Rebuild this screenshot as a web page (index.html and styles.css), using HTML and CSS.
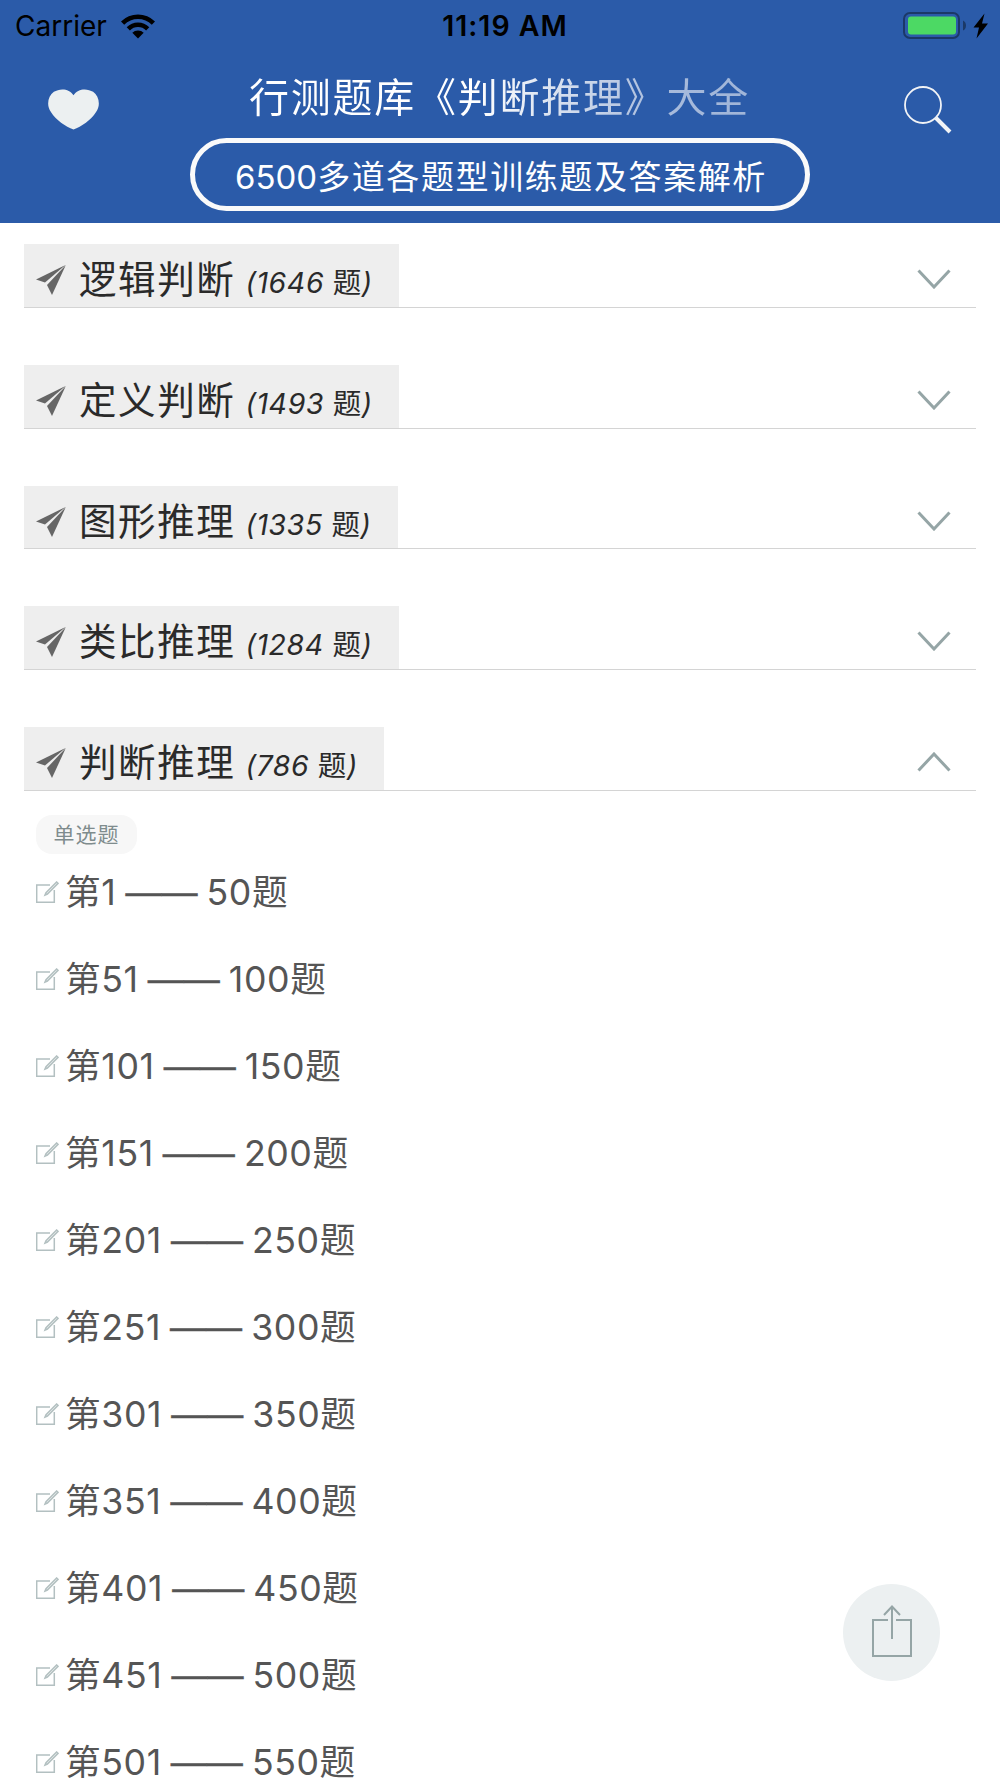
FILE: index.html
```html
<!DOCTYPE html>
<html lang="zh-CN">
<head>
  <meta charset="UTF-8">
  <meta name="viewport" content="width=device-width, initial-scale=1.0">
  <title>行测题库《判断推理》大全</title>
  <link rel="stylesheet" href="styles.css">
</head>
<body>
  <!-- Shared icons -->
  <svg class="icon-defs" width="0" height="0">
    <symbol id="icon-plane" viewBox="0 0 30 30">
      <path d="M0 14.5L29.5 0L9 17.5Z"/>
      <path d="M29.8 0L16 30L11 20Z"/>
    </symbol>
    <symbol id="icon-down" viewBox="0 0 34 20">
      <path d="M1.5 1.5L17 18L32.5 1.5"/>
    </symbol>
    <symbol id="icon-up" viewBox="0 0 34 20">
      <path d="M1.5 18.5L17 2L32.5 18.5"/>
    </symbol>
    <symbol id="icon-edit" viewBox="0 0 23 22">
      <path d="M14 4H.7V21.3H18.3V9"/>
      <path d="M9 14L10 11.6L20.6 1L22 2.4L11.4 13Z"/>
    </symbol>
  </svg>

  <header class="header">
    <div class="status-bar">
      <div class="status-left">
        <span class="carrier">Carrier</span>
        <svg class="wifi" width="34" height="25" viewBox="0 0 34 25">
          <path d="M0 7.5A24 24 0 0 1 34 7.5L30.8 10.7A19.6 19.6 0 0 0 3.2 10.7Z"/>
          <path d="M5.7 13.2A16 16 0 0 1 28.3 13.2L25.1 16.4A11.5 11.5 0 0 0 8.900 16.4Z"/>
          <path d="M11.3 18.8A8 8 0 0 1 22.7 18.8L17 24.5Z"/>
        </svg>
      </div>
      <span class="time">11:19 AM</span>
      <svg class="battery" width="85" height="27" viewBox="0 0 85 27">
        <rect class="battery-case" x="1" y="1" width="55" height="25" rx="6"/>
        <rect class="battery-level" x="5" y="4.500" width="48" height="18" rx="3"/>
        <path class="battery-cap" d="M60 8.5Q63 10 63 13.5T60 18.5Z"/>
        <path d="M81.5 1.5L70.5 15.5H76L73.5 26.5L85 11.5H79Z"/>
      </svg>
    </div>
    <div class="nav">
      <svg class="heart" width="51" height="41" viewBox="0 0 52 41">
        <path d="M26 6C22-1 12-1.500 6 2.500C0 7-2 16 3 23C8 31 18 38 26 41C34 38 44 31 49 23C54 16 52 7 46 2.500C40-1.500 30-1 26 6Z"/>
      </svg>
      <div class="titles">
        <h1 class="title">行测题库《判断推理》大全</h1>
        <p class="subtitle"><span class="num">6500</span>多道各题型训练题及答案解析</p>
      </div>
      <svg class="search" width="48" height="48" viewBox="0 0 48 48">
        <circle cx="19" cy="19" r="18"/>
        <path d="M32 32L46 46"/>
      </svg>
    </div>
  </header>

  <main class="sections">
    <section class="section">
      <div class="section-head">
        <div class="section-tag"><svg class="plane"><use href="#icon-plane"/></svg><span class="section-name">逻辑判断</span><span class="count">(1646 <b>题</b>)</span></div>
        <svg class="arrow"><use href="#icon-down"/></svg>
      </div>
    </section>
    <section class="section">
      <div class="section-head">
        <div class="section-tag"><svg class="plane"><use href="#icon-plane"/></svg><span class="section-name">定义判断</span><span class="count">(1493 <b>题</b>)</span></div>
        <svg class="arrow"><use href="#icon-down"/></svg>
      </div>
    </section>
    <section class="section">
      <div class="section-head">
        <div class="section-tag"><svg class="plane"><use href="#icon-plane"/></svg><span class="section-name">图形推理</span><span class="count">(1335 <b>题</b>)</span></div>
        <svg class="arrow"><use href="#icon-down"/></svg>
      </div>
    </section>
    <section class="section">
      <div class="section-head">
        <div class="section-tag"><svg class="plane"><use href="#icon-plane"/></svg><span class="section-name">类比推理</span><span class="count">(1284 <b>题</b>)</span></div>
        <svg class="arrow"><use href="#icon-down"/></svg>
      </div>
    </section>
    <section class="section">
      <div class="section-head">
        <div class="section-tag"><svg class="plane"><use href="#icon-plane"/></svg><span class="section-name">判断推理</span><span class="count">(786 <b>题</b>)</span></div>
        <svg class="arrow"><use href="#icon-up"/></svg>
      </div>
      <div class="section-body">
        <span class="type">单选题</span>
        <ul class="list">
          <li><svg class="edit"><use href="#icon-edit"/></svg>第1 <span class="dash">——</span> 50题</li>
          <li><svg class="edit"><use href="#icon-edit"/></svg>第51 <span class="dash">——</span> 100题</li>
          <li><svg class="edit"><use href="#icon-edit"/></svg>第101 <span class="dash">——</span> 150题</li>
          <li><svg class="edit"><use href="#icon-edit"/></svg>第151 <span class="dash">——</span> 200题</li>
          <li><svg class="edit"><use href="#icon-edit"/></svg>第201 <span class="dash">——</span> 250题</li>
          <li><svg class="edit"><use href="#icon-edit"/></svg>第251 <span class="dash">——</span> 300题</li>
          <li><svg class="edit"><use href="#icon-edit"/></svg>第301 <span class="dash">——</span> 350题</li>
          <li><svg class="edit"><use href="#icon-edit"/></svg>第351 <span class="dash">——</span> 400题</li>
          <li><svg class="edit"><use href="#icon-edit"/></svg>第401 <span class="dash">——</span> 450题</li>
          <li><svg class="edit"><use href="#icon-edit"/></svg>第451 <span class="dash">——</span> 500题</li>
          <li><svg class="edit"><use href="#icon-edit"/></svg>第501 <span class="dash">——</span> 550题</li>
        </ul>
      </div>
    </section>
  </main>

  <!-- Floating share button -->
  <button class="share" type="button" aria-label="分享">
    <svg width="40" height="52" viewBox="0 0 40 52">
      <path d="M16 15H1V51H39V15H24M20 34V2M12 10L20 1.500L28 10"/>
    </svg>
  </button>
</body>
</html>
```

FILE: styles.css
```css
* {
  box-sizing: border-box;
}

body {
  margin: 0;
  height: 1778px;
  overflow: hidden;
  background-color: #fff;
  font-family: Inter, "Noto Sans CJK SC", sans-serif;
}

.icon-defs {
  position: absolute;
}

/* Header */
.header {
  height: 223px;
  background-color: #2b5ba9;
}

.status-bar {
  display: grid;
  grid-template-columns: 1fr auto 1fr;
  align-items: center;
  height: 50px;
  padding: 0 12px 0 15px;
  color: #000;
}

.status-left {
  display: flex;
  align-items: center;
  gap: 14px;
}

.carrier {
  font-size: 28px;
  line-height: 52px;
}

.time {
  padding-left: 7px;
  font-size: 28.5px;
  font-weight: 600;
  line-height: 52px;
  letter-spacing: 1px;
}

.battery {
  justify-self: end;
  margin-bottom: 2px;
}

.battery-case {
  fill: none;
  stroke: #1b3967;
  stroke-width: 2;
}

.battery-level {
  fill: #4cd964;
}

.battery-cap {
  fill: #1b3967;
}

.nav {
  display: flex;
  justify-content: space-between;
  padding: 0 48px;
}

.heart {
  margin-top: 39px;
  fill: #ecf0f1;
}

.titles {
  display: flex;
  flex-direction: column;
  align-items: center;
  margin-right: 4px;
}

.title {
  margin: 18px 0 0;
  height: 60px;
  font-size: 40px;
  font-weight: 400;
  line-height: 60px;
  letter-spacing: 1.75px;
  white-space: nowrap;
  color: transparent;
  background: linear-gradient(to right, #fff 45%, #a8bbdc 82%, #a0b5d8 100%);
  -webkit-background-clip: text;
  background-clip: text;
}

.subtitle {
  width: 620px;
  height: 73px;
  margin: 10px 0 0;
  padding-left: 3px;
  border: 5px solid #fafafa;
  border-radius: 37px;
  font-size: 33px;
  line-height: 68px;
  letter-spacing: 1.6px;
  text-align: center;
  color: #fff;
}

.num {
  letter-spacing: 0;
}

.search {
  margin-top: 36px;
  fill: none;
  stroke: #f1f3f6;
  stroke-width: 1.8;
}

.search path {
  stroke-width: 4;
}

/* Sections */
.sections {
  padding: 21px 24px 0;
}

.section-head {
  display: flex;
  justify-content: space-between;
  height: 63.75px;
  margin-bottom: 57px;
  padding-right: 25px;
  border-bottom: 1px solid #d4d4d4;
}

.section-tag {
  display: flex;
  align-items: baseline;
  padding: 0 26px 0 12px;
  background-color: #eee;
  color: #2a2a2a;
  line-height: 72px;
  white-space: nowrap;
}

.plane {
  align-self: flex-start;
  width: 30px;
  height: 30px;
  margin: 21px 13px 0 0;
  fill: #666;
}

.section-name {
  font-size: 37.5px;
  letter-spacing: 1.6px;
}

.count {
  margin-left: 10px;
  font-size: 28.5px;
  font-style: italic;
  letter-spacing: 0.6px;
}

.count b {
  font-style: normal;
  font-weight: 400;
}

.arrow {
  width: 34px;
  height: 20px;
  margin-top: 25px;
  fill: none;
  stroke: #95a5a6;
  stroke-width: 3;
}

.section-body {
  margin-top: -33px;
  padding-left: 12px;
}

.type {
  display: block;
  width: 101px;
  height: 39px;
  border-radius: 16px;
  background-color: #f7f7f7;
  color: #7f8c8d;
  font-size: 21px;
  line-height: 39px;
  letter-spacing: 1px;
  text-align: center;
}

.list {
  margin: 0;
  padding: 0;
  list-style: none;
}

.list li {
  height: 87px;
  font-size: 35.7px;
  line-height: 77px;
  letter-spacing: 0.6px;
  word-spacing: -1.6px;
  color: #555;
  white-space: nowrap;
}

.edit {
  width: 23px;
  height: 22px;
  margin-right: 6px;
  vertical-align: 2px;
  fill: none;
  stroke: #b3c0c1;
  stroke-width: 1.5;
}

.dash {
  font-family: "Liberation Sans", sans-serif;
  font-size: 36px;
  line-height: 1;
  letter-spacing: 0;
  vertical-align: 1px;
  -webkit-text-stroke: 0.5px #555;
}

/* Share button */
.share {
  position: fixed;
  right: 60px;
  bottom: 97px;
  display: flex;
  align-items: center;
  justify-content: center;
  width: 97px;
  height: 97px;
  padding: 0 0 3px;
  border: 0;
  border-radius: 50%;
  background-color: #ecf0f1;
}

.share svg {
  fill: none;
  stroke: #95a5a6;
  stroke-width: 2;
}
```
